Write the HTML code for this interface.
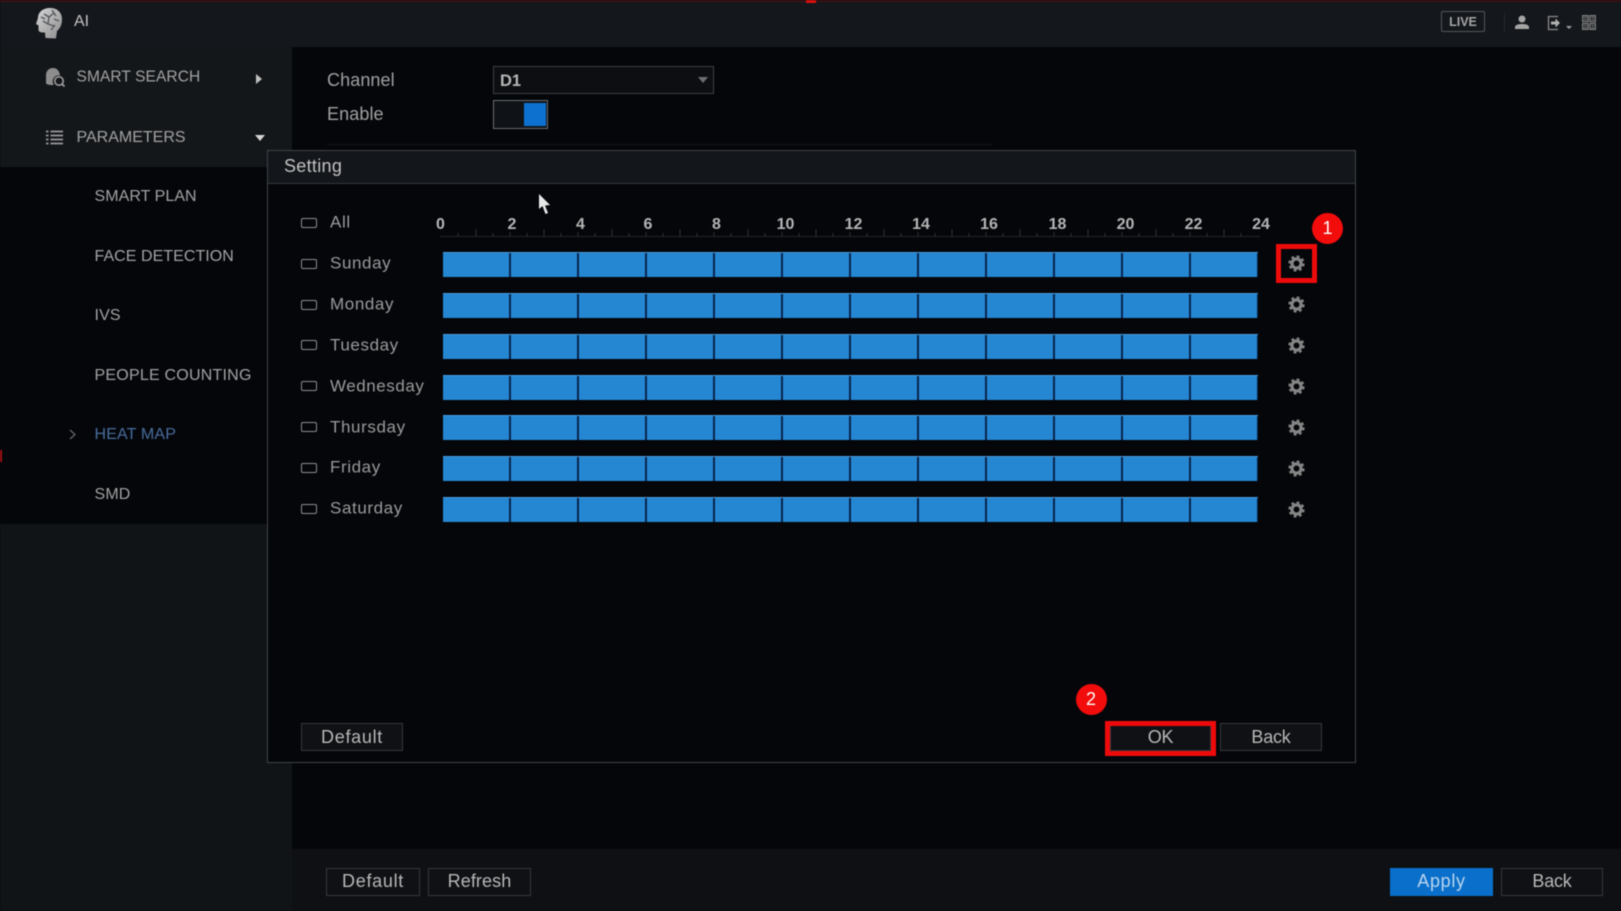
<!DOCTYPE html>
<html>
<head>
<meta charset="utf-8">
<style>
html,body{margin:0;padding:0;background:#04060a}
#p{position:relative;width:1621px;height:911px;overflow:hidden;background:#04060a;font-family:"Liberation Sans",sans-serif;color:#a9a9a9;filter:blur(.5px)}
#p div,#p svg{position:absolute;box-sizing:border-box}
.t{white-space:nowrap;transform:translateY(-50%);line-height:1}
.m{font-size:16px;letter-spacing:.15px;color:#a2a2a2}
.d{font-size:17px;letter-spacing:.6px;color:#9a9a9a;left:330px}
.l{font-size:18px;letter-spacing:.1px;color:#a0a0a0;left:327px}
.n{font-size:16px;font-weight:bold;color:#b5b5b5;transform:translate(-50%,-50%);top:225px}
.c{left:301px;width:16px;height:10px;border:1.5px solid #8e8e8e;border-radius:2px}
.bar{left:443px;width:815px;height:25px;background:repeating-linear-gradient(90deg,#2586d2 0,#2586d2 65.800px,#08244c 65.800px,#08244c 68px);box-shadow:inset 0 1px 0 #4a9ad8}
.b{display:flex;align-items:center;justify-content:center;border:1.5px solid #35383b;background:#0f1114;color:#b8b8b8;font-size:18px;letter-spacing:.7px;height:28px}
.g{left:1288px;width:17px;height:17px}
.r{border-radius:50%;background:#f20c0c;color:#fff;width:31px;height:31px;display:flex;align-items:center;justify-content:center;font-size:18px}
</style>
</head>
<body>
<div id="p">
<svg width="0" height="0" style="position:absolute"><defs>
<symbol id="gear" viewBox="0 0 20 20"><circle cx="10" cy="10" r="5.400" fill="none" stroke="#858585" stroke-width="3.800"/><circle cx="10" cy="10" r="8" fill="none" stroke="#858585" stroke-width="3.200" stroke-dasharray="3.200 3.080"/></symbol>
</defs></svg>

<!-- header -->
<div style="left:0;top:0;width:1621px;height:47px;background:#14171b"></div>
<div style="left:0;top:0;width:1621px;height:1.500px;background:#3c1216"></div>
<div style="left:806px;top:0;width:10px;height:2.500px;background:#d81010"></div>
<svg style="left:35px;top:7px" width="28" height="33" viewBox="0 0 28 33"><defs><linearGradient id="hd" x1="0" y1="0" x2="1" y2="1"><stop offset="0" stop-color="#d6d6d6"/><stop offset="1" stop-color="#8c8c8c"/></linearGradient></defs><path d="M15 1C8 1 3 5 3 11L1 17L3.500 18.500L3.500 23C4 25.500 7 25.500 10 25.500L10.500 31L21 31.500L22 24C25.500 21 27 17 27 12.500C27 5 22 1 15 1Z" fill="url(#hd)"/><path d="M9 7L14 10L19 6M14 10L13 17M19 12L24 14M8 14L13 17L19 19M6 10L10 12M17 3L21 9M16 23L20 18" stroke="#55585c" stroke-width="1.400" fill="none"/></svg>
<div class="t" style="left:74px;top:22px;font-size:16px;color:#c4c4c4">AI</div>
<div style="left:1441px;top:11px;width:44px;height:21px;border:1.500px solid #55585b;border-radius:2px;display:flex;align-items:center;justify-content:center;font-size:12.500px;color:#a5a5a5;font-weight:bold">LIVE</div>
<div style="left:1504px;top:13px;width:1px;height:19px;background:#26292c"></div>
<svg style="left:1515px;top:15px" width="14" height="15" viewBox="0 0 14 15"><circle cx="7" cy="4" r="3.500" fill="#a5a5a5"/><path d="M0 14V11.500C1 9.500 4 9 7 9S13 9.500 14 11.500V14Z" fill="#a5a5a5"/></svg>
<svg style="left:1547px;top:15px" width="27" height="16" viewBox="0 0 27 16"><path d="M11 1.500H1.500V14.500H11" fill="none" stroke="#8a8a8a" stroke-width="1.300"/><path d="M4 6.500H8.500V3.500L13 8L8.500 12.500V9.500H4Z" fill="#b0b0b0"/><path d="M19 11H25L22 14Z" fill="#a0a0a0"/></svg>
<svg style="left:1582px;top:15px" width="14" height="15" viewBox="0 0 14 15"><path d="M.7.7H6V6.500H.7ZM8 .7H13.300V6.500H8ZM.7 8.500H6V14.300H.7ZM8 8.500H13.300V14.300H8Z" fill="none" stroke="#808080" stroke-width="1.300"/><path d="M2 2.500H4.700M2 4.500H4.700M9.500 2.500H12M9.500 4.500H12M2 10.500H4.700M2 12.500H4.700M9.500 10.500H12M9.500 12.500H12" stroke="#808080" stroke-width="1"/></svg>

<!-- sidebar -->
<div style="left:0;top:47px;width:292px;height:120px;background:#14171a"></div>
<div style="left:0;top:167px;width:267px;height:357px;background:#04060a"></div>
<div style="left:0;top:524px;width:292px;height:387px;background:#111417"></div>
<div style="left:0;top:450px;width:2px;height:12px;background:#a01010"></div>

<svg style="left:45px;top:67px" width="21" height="21" viewBox="0 0 21 21"><path d="M8 1C4 1 1 4 1 8V16C1 17 3 18 7 18H9A6 6 0 0 1 15 8.500C14.500 4 12 1 8 1Z" fill="#8d8d8d"/><circle cx="14" cy="14" r="4.200" fill="none" stroke="#a5a5a5" stroke-width="1.500"/><path d="M17 17L19.500 19.500" stroke="#a5a5a5" stroke-width="1.600"/></svg>
<svg style="left:46px;top:129.500px" width="18" height="16" viewBox="0 0 18 16"><path d="M0 1.500H2.500M4.500 1.500H17M0 5.500H2.500M4.500 5.500H17M0 9.500H2.500M4.500 9.500H17M0 13.500H2.500M4.500 13.500H17" stroke="#9a9a9a" stroke-width="1.800"/></svg>
<div class="t m" style="left:76.500px;top:77px;font-size:15.500px;letter-spacing:.1px">SMART SEARCH</div>
<div class="t m" style="left:76.500px;top:137.500px;letter-spacing:0">PARAMETERS</div>
<svg style="left:255px;top:73px" width="8" height="12" viewBox="0 0 8 12"><path d="M1 1L7 6L1 11Z" fill="#c0c0c0"/></svg>
<svg style="left:254px;top:134px" width="12" height="8" viewBox="0 0 12 8"><path d="M1 1H11L6 7Z" fill="#d5d5d5"/></svg>
<div class="t m" style="left:94.500px;top:197px;letter-spacing:.05px">SMART PLAN</div>
<div class="t m" style="left:94.500px;top:257px;letter-spacing:.05px">FACE DETECTION</div>
<div class="t m" style="left:94.500px;top:316px">IVS</div>
<div class="t m" style="left:94.500px;top:376px;letter-spacing:.22px">PEOPLE COUNTING</div>
<div class="t m" style="left:94.500px;top:435px;color:#4a6d9e">HEAT MAP</div>
<div class="t m" style="left:94.500px;top:495px">SMD</div>
<svg style="left:69px;top:429px" width="7" height="11" viewBox="0 0 7 11"><path d="M1 1L6 5.500L1 10" fill="none" stroke="#666" stroke-width="1.300"/></svg>

<!-- main form -->
<div class="t l" style="top:80px">Channel</div>
<div class="t l" style="top:114px">Enable</div>
<div style="left:493px;top:66px;width:221px;height:28px;border:1.500px solid #3e4144;background:#0c0e11"></div>
<div class="t" style="left:500px;top:80.500px;font-size:16.500px;font-weight:bold;color:#b5b5b5">D1</div>
<svg style="left:698px;top:76px" width="10" height="8" viewBox="0 0 10 8"><path d="M0 1H10L5 7Z" fill="#6f6f6f"/></svg>
<div style="left:493px;top:100px;width:55px;height:29px;border:1.500px solid #6a6d70;background:#0f1317"></div>
<div style="left:524px;top:103px;width:22px;height:23px;background:#0d72cf"></div>
<div style="left:327px;top:144px;width:665px;height:1px;background:#14161a"></div>

<!-- footer -->
<div style="left:292px;top:849px;width:1329px;height:62px;background:#0e1013"></div>
<div class="b" style="left:326px;top:867.500px;width:94px">Default</div>
<div class="b" style="left:428px;top:867.500px;width:103px;letter-spacing:.1px">Refresh</div>
<div class="b" style="left:1390px;top:867.500px;width:103px;background:#0a6fca;border-color:#0a6fca;color:#b9d5ee">Apply</div>
<div class="b" style="left:1501px;top:867.500px;width:102px;letter-spacing:-.2px">Back</div>

<!-- modal -->
<div style="left:267px;top:150px;width:1089px;height:613px;background:#04060a;border:1.500px solid #414447"></div>
<div style="left:268px;top:151px;width:1087px;height:33px;background:#13161a;border-bottom:1.500px solid #36393c"></div>
<div class="t" style="left:284px;top:166px;font-size:18px;letter-spacing:.3px;color:#c2c2c2">Setting</div>

<div class="c" style="top:218px"></div>
<div class="t d" style="top:222px">All</div>
<div class="n" style="left:440.500px">0</div><div class="n" style="left:512px">2</div><div class="n" style="left:580.500px">4</div><div class="n" style="left:648px">6</div><div class="n" style="left:716.500px">8</div><div class="n" style="left:785.500px">10</div><div class="n" style="left:853.500px">12</div><div class="n" style="left:921px">14</div><div class="n" style="left:989px">16</div><div class="n" style="left:1057.500px">18</div><div class="n" style="left:1125.500px">20</div><div class="n" style="left:1193.500px">22</div><div class="n" style="left:1261px">24</div>
<svg style="left:440px;top:226px" width="820" height="12" viewBox="0 0 820 12"><path d="M0 10.500H820" stroke="#232528" stroke-width="1"/><path d="M36 3V10M70 6V10M104 3V10M138 6V10M172 3V10M206 6V10M240 3V10M274 6V10M308 3V10M342 6V10M376 3V10M410 6V10M444 3V10M478 6V10M512 3V10M546 6V10M580 3V10M614 6V10M648 3V10M682 6V10M716 3V10M750 6V10M784 3V10M18 7V10M53 7V10M87 7V10M121 7V10M155 7V10M189 7V10M223 7V10M257 7V10M291 7V10M325 7V10M359 7V10M393 7V10M427 7V10M461 7V10M495 7V10M529 7V10M563 7V10M597 7V10M631 7V10M665 7V10M699 7V10M733 7V10M767 7V10M801 7V10" stroke="#2e3033" stroke-width="1"/></svg>

<div class="c" style="top:259px"></div><div class="t d" style="top:263px">Sunday</div><div class="bar" style="top:252px"></div><svg class="g" style="top:255px" width="17" height="17"><use href="#gear"/></svg>
<div class="c" style="top:300px"></div><div class="t d" style="top:304px">Monday</div><div class="bar" style="top:293px"></div><svg class="g" style="top:296px" width="17" height="17"><use href="#gear"/></svg>
<div class="c" style="top:340px"></div><div class="t d" style="top:345px">Tuesday</div><div class="bar" style="top:334px"></div><svg class="g" style="top:337px" width="17" height="17"><use href="#gear"/></svg>
<div class="c" style="top:381px"></div><div class="t d" style="top:385.500px;letter-spacing:.55px">Wednesday</div><div class="bar" style="top:374.500px"></div><svg class="g" style="top:378px" width="17" height="17"><use href="#gear"/></svg>
<div class="c" style="top:422px"></div><div class="t d" style="top:426.500px">Thursday</div><div class="bar" style="top:415px"></div><svg class="g" style="top:419px" width="17" height="17"><use href="#gear"/></svg>
<div class="c" style="top:463px"></div><div class="t d" style="top:467px">Friday</div><div class="bar" style="top:456px"></div><svg class="g" style="top:460px" width="17" height="17"><use href="#gear"/></svg>
<div class="c" style="top:504px"></div><div class="t d" style="top:508px">Saturday</div><div class="bar" style="top:497px"></div><svg class="g" style="top:500.500px" width="17" height="17"><use href="#gear"/></svg>

<div class="b" style="left:301px;top:723px;width:102px">Default</div>
<div class="b" style="left:1110px;top:723px;width:101px;letter-spacing:-.2px">OK</div>
<div class="b" style="left:1220px;top:723px;width:102px;letter-spacing:-.2px">Back</div>

<!-- annotations -->
<div style="left:1276px;top:244px;width:41px;height:39px;border:5px solid #ee0a0a"></div>
<div style="left:1105px;top:721px;width:111px;height:35px;border:5px solid #ee0a0a"></div>
<div class="r" style="left:1312px;top:213px">1</div>
<div class="r" style="left:1075.500px;top:684px">2</div>

<!-- cursor -->
<svg style="left:538px;top:194px" width="13" height="21" viewBox="0 0 13 21"><path d="M1 0V15L4.500 12L7.500 20L10 19L7 11.500L12 11Z" fill="#e8e8e8"/></svg>
</div>
</body>
</html>
